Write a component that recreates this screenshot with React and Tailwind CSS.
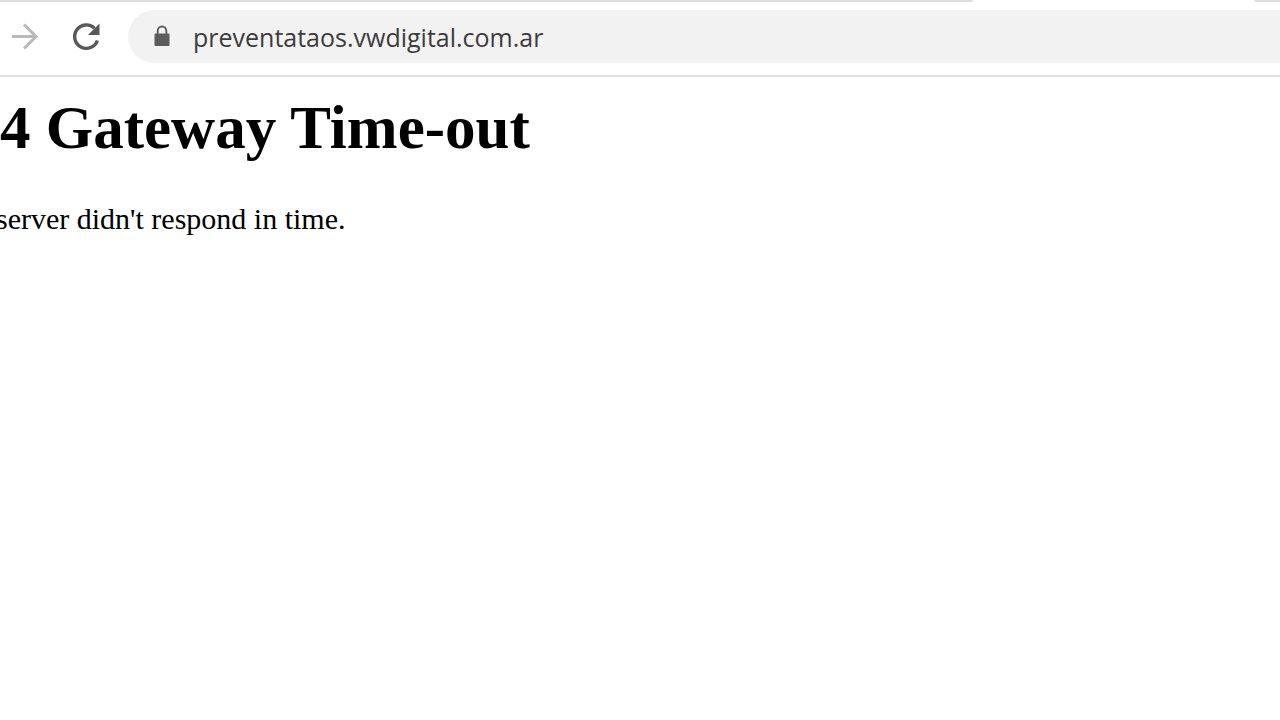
import React, { useState } from 'react';

const ForwardIcon = () => (
  <svg className="w-8 h-8" viewBox="0 0 32 32" fill="none" stroke="#b9b9b9" strokeWidth="3" aria-hidden="true">
    <path d="M4 15.500h24M16 3.500l12 12-12 12" />
  </svg>
);

const ReloadIcon = () => (
  <svg className="w-8 h-8" viewBox="0 0 32 32" aria-hidden="true">
    <path d="M27.400 19.500A11.700 11.700 0 1 1 24.500 7.200" fill="none" stroke="#585858" strokeWidth="3.4" />
    <path d="M29.500 2.500v11.500H18z" fill="#585858" />
  </svg>
);

const LockIcon = () => (
  <svg className="w-4 h-6 shrink-0" viewBox="0 0 16 24" aria-hidden="true">
    <rect x="0.500" y="8.500" width="15" height="12.500" rx="1" fill="#5c5c5c" />
    <path d="M3.700 9V5.800a4.300 4.300 0 0 1 8.600 0V9" fill="none" stroke="#5c5c5c" strokeWidth="1.900" />
  </svg>
);

const Toolbar = () => {
  const [url, setUrl] = useState('preventataos.vwdigital.com.ar');

  return (
    <header className="border-b-2 border-[#dedede]">
      {/* Bottom edge of the tab strip, open under the active tab */}
      <div className="flex justify-between h-[2px]">
        <div className="w-[76%] rounded-br-sm bg-[#dedede]" />
        <div className="w-[2%] rounded-bl-sm bg-[#dedede]" />
      </div>

      <div className="flex items-center pl-2 pt-2 pb-3">
        <button type="button" aria-label="Forward" disabled>
          <ForwardIcon />
        </button>
        <button type="button" aria-label="Reload" className="ml-[30px]">
          <ReloadIcon />
        </button>
        <div className="flex flex-1 items-center ml-[26px] h-[53px] pl-[26px] rounded-l-full bg-[#f2f2f2]">
          <LockIcon />
          <input
            type="text"
            aria-label="Address"
            value={url}
            onChange={(e) => setUrl(e.target.value)}
            className="flex-1 ml-[23px] bg-transparent outline-none font-['Open_Sans',sans-serif] text-[25px] leading-8 text-[#3c3c3c]"
          />
        </div>
      </div>
    </header>
  );
};

const App = () => (
  <div className="min-h-screen overflow-hidden bg-white">
    <Toolbar />
    <main className="pt-4 font-['Liberation_Serif',serif] text-black">
      <h1 className="text-[61px] leading-[70px] font-bold">4 Gateway Time-out</h1>
      <p className="-ml-1 mt-10 text-[30px] leading-8">server didn't respond in time.</p>
    </main>
  </div>
);

export default App;
